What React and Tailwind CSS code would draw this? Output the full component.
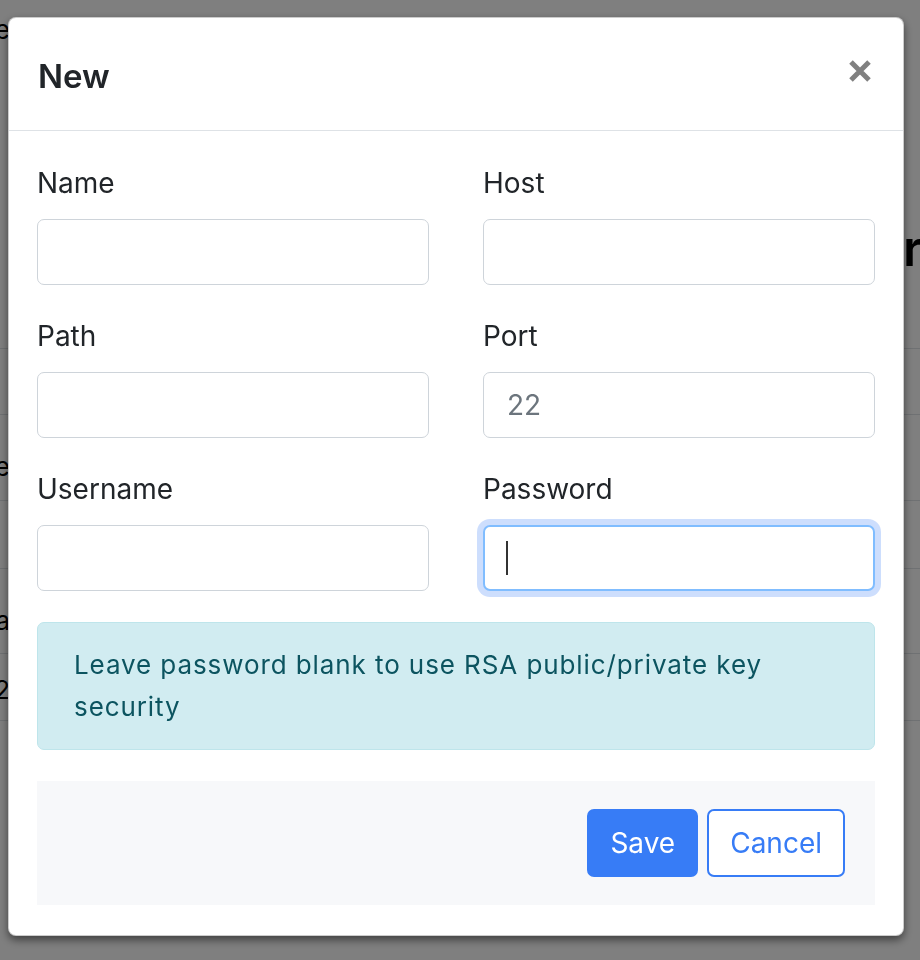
// App.jsx - "New" connection modal over a dimmed page
const fields = [
  { label: 'Name', name: 'name' },
  { label: 'Host', name: 'host' },
  { label: 'Path', name: 'path' },
  { label: 'Port', name: 'port', placeholder: '22' },
  { label: 'Username', name: 'username' },
  { label: 'Password', name: 'password', type: 'password', focused: true },
];

// Rows of the page behind the backdrop (only the edges peek out)
const pageRows = [
  { h: 'h-[52px]', pad: 'pt-[9px]', left: 'Name', right: '' },
  { h: 'h-[160px]', pad: 'pt-[14px]', left: '', right: '' },
  { h: 'h-[136px]', pad: 'pt-[14px]', left: '', right: 're', rightPad: 'pt-[6px]' },
  { h: 'h-[66px]', pad: 'pt-[14px]', left: '', right: '', line: true },
  { h: 'h-[86px]', pad: 'pt-[31px]', left: 'Type', right: '', line: true },
  { h: 'h-[68px]', pad: 'pt-[14px]', left: '', right: '', line: true },
  { h: 'h-[85px]', pad: 'pt-[31px]', left: 'Data', right: '', line: true },
  { h: 'h-[67px]', pad: 'pt-[15px]', left: '2', right: '', line: true },
  { h: 'h-[240px]', pad: 'pt-[14px]', left: '', right: '', line: true },
];

function CloseIcon() {
  return (
    <svg width="24" height="24" viewBox="0 0 24 24" className="text-[#808080]">
      <path d="M3 3 L21 21 M21 3 L3 21" stroke="currentColor" strokeWidth="5" strokeLinecap="butt" />
    </svg>
  );
}

function Field({ label, name, type = 'text', placeholder, focused }) {
  return (
    <div className="flex flex-col">
      <label htmlFor={name} className="text-[28px] leading-[42px] mb-[15px] text-[#212529]">
        {label}
      </label>
      <div className="relative">
        <input
          id={name}
          type={type}
          placeholder={placeholder}
          className={
            focused
              ? 'w-full h-[66px] px-[23px] text-[28px] rounded-[7px] border-2 border-[#80bdff] bg-white outline-none shadow-[0_0_0_6px_rgba(55,123,246,0.25)]'
              : 'w-full h-[66px] px-[23px] text-[28px] rounded-[7px] border-[1.75px] border-[#ced4da] bg-white outline-none placeholder:text-[#6c757d]'
          }
        />
        {focused && <span className="absolute left-[23px] top-[16px] w-[2px] h-[34px] bg-[#333]" />}
      </div>
    </div>
  );
}

export default function App() {
  return (
    <div className="relative min-h-[960px] bg-white overflow-hidden font-['Inter','Helvetica',sans-serif] text-[#212529]">
      {/* Page content behind the modal */}
      <div className="flex flex-col">
        {pageRows.map((row, idx) => (
          <div
            key={idx}
            className={`flex justify-between ${row.h} ${row.line ? 'border-t border-[#dee2e6]' : ''}`}
          >
            <div className={`w-[10px] flex justify-end whitespace-nowrap text-[26px] leading-[42px] text-black ${row.pad}`}>
              {row.left}
            </div>
            <div className={`w-[17px] overflow-hidden whitespace-nowrap text-[50px] leading-[60px] font-semibold tracking-tight text-black ${row.rightPad || ''}`}>
              {row.right}
            </div>
          </div>
        ))}
      </div>

      {/* Backdrop */}
      <div className="fixed inset-0 bg-black/50" />

      {/* Modal */}
      <div className="fixed inset-0 flex items-start">
        <div className="ml-[8px] mt-[17px] w-[896px] bg-white rounded-lg border border-black/20 shadow-[0_4px_8px_rgba(0,0,0,0.5)]">
          <div className="h-[113px] px-[29px] pt-[4px] flex items-center justify-between border-b border-[#dee2e6]">
            <h5 className="text-[33px] font-semibold leading-[52px] text-[#212529]">New</h5>
            <button className="mr-[2px] mb-[10px]" aria-label="Close">
              <CloseIcon />
            </button>
          </div>

          <div className="px-[28px] pt-[31px] pb-[30px]">
            <div className="grid grid-cols-2 gap-x-[54px] gap-y-[30px]">
              {fields.map((f) => (
                <Field key={f.name} {...f} />
              ))}
            </div>

            <div className="mt-[31px] px-[36px] py-[21px] rounded-[7px] border-[1.75px] border-[#bee5eb] bg-[#d1ecf1] text-[#0c5460] text-[26px] tracking-[0.035em] leading-[42px]">
              <p className="max-w-[730px]">Leave password blank to use RSA public/private key security</p>
            </div>

            <div className="mt-[31px] h-[124px] bg-[#f7f8fa] flex items-center justify-end gap-[9px] pr-[30px]">
              <button className="h-[68px] px-[21px] rounded-[7px] bg-[#377cf6] border-2 border-[#377cf6] text-white text-[28px]">
                Save
              </button>
              <button className="h-[68px] px-[21px] rounded-[7px] bg-white border-2 border-[#377cf6] text-[#377cf6] text-[28px]">
                Cancel
              </button>
            </div>
          </div>
        </div>
      </div>
    </div>
  );
}
